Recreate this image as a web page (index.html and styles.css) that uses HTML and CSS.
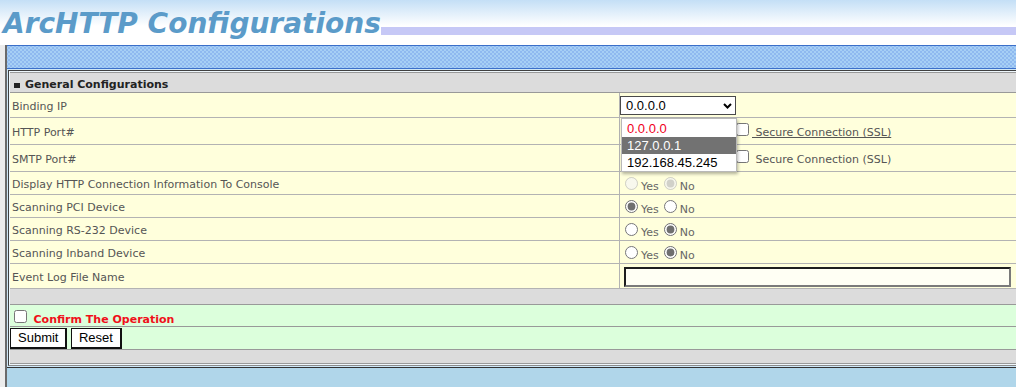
FILE: index.html
```html
<!DOCTYPE html>
<html lang="en">
<head>
<meta charset="UTF-8" />
<title>ArcHTTP Configurations</title>
<link rel="stylesheet" href="styles.css">
</head>
<body>

<div class="top">
  <h1 class="title">ArcHTTP Configurations</h1>
  <div class="stripe"></div>
</div>

<div class="frame">
  <div class="side"></div>
  <div class="main">
    <div class="dots"></div>
    <div class="panel">
      <div class="box">
        <table class="cfg">
          <colgroup><col class="c-label"><col></colgroup>
          <tr class="r-head">
            <td colspan="2"><span class="bullet"></span>General Configurations</td>
          </tr>
          <tr class="r-sel">
            <td class="label">Binding IP</td>
            <td class="value pop-anchor">
              <span class="select-wrap">
                <select class="select">
                  <option>0.0.0.0</option>
                  <option>127.0.0.1</option>
                  <option>192.168.45.245</option>
                </select>
                <svg class="chev" width="9" height="6" viewBox="0 0 9 6"><path d="M1 1 L4.5 4.5 L8 1" fill="none" stroke="#000" stroke-width="2"/></svg>
              </span>
              <div class="popup">
                <div class="opt opt-current">0.0.0.0</div>
                <div class="opt opt-hover">127.0.0.1</div>
                <div class="opt">192.168.45.245</div>
              </div>
            </td>
          </tr>
          <tr class="r-port">
            <td class="label">HTTP Port#</td>
            <td class="value"><input class="field port" type="text" value="81"><input type="checkbox"><label class="ssl ssl-hover"> Secure Connection (SSL)</label></td>
          </tr>
          <tr class="r-port">
            <td class="label">SMTP Port#</td>
            <td class="value"><input class="field port" type="text" value="25"><input type="checkbox"><label class="ssl"> Secure Connection (SSL)</label></td>
          </tr>
          <tr class="r-radio">
            <td class="label">Display HTTP Connection Information To Console</td>
            <td class="value"><input type="radio" name="disp" disabled><span class="yn">Yes</span><input type="radio" name="disp" checked disabled><span class="yn">No</span></td>
          </tr>
          <tr class="r-radio">
            <td class="label">Scanning PCI Device</td>
            <td class="value"><input type="radio" name="pci" checked><span class="yn">Yes</span><input type="radio" name="pci"><span class="yn">No</span></td>
          </tr>
          <tr class="r-radio">
            <td class="label">Scanning RS-232 Device</td>
            <td class="value"><input type="radio" name="rs"><span class="yn">Yes</span><input type="radio" name="rs" checked><span class="yn">No</span></td>
          </tr>
          <tr class="r-radio">
            <td class="label">Scanning Inband Device</td>
            <td class="value"><input type="radio" name="inb"><span class="yn">Yes</span><input type="radio" name="inb" checked><span class="yn">No</span></td>
          </tr>
          <tr class="r-input">
            <td class="label">Event Log File Name</td>
            <td class="value"><input class="field logname" type="text"></td>
          </tr>
          <tr class="r-gap">
            <td colspan="2"></td>
          </tr>
          <tr class="r-confirm">
            <td colspan="2"><input type="checkbox"> <span class="confirm">Confirm The Operation</span></td>
          </tr>
          <tr class="r-buttons">
            <td colspan="2"><button class="btn">Submit</button> <button class="btn">Reset</button></td>
          </tr>
          <tr class="r-gap r-last">
            <td colspan="2"></td>
          </tr>
        </table>
      </div>
    </div>
  </div>
</div>

</body>
</html>
```

FILE: styles.css
```css
html, body {
  margin: 0;
  height: 100%;
}
body {
  font-family: "DejaVu Sans", Verdana, sans-serif;
  font-size: 11px;
  background: #b0d6ea;
  overflow: hidden;
}

/* page title strip */
.top {
  display: flex;
  height: 45px;
  background: linear-gradient(#c4dff6, #ffffff 26px);
}
.title {
  margin: 0;
  padding: 7px 0 0 3px;
  font-size: 28px;
  font-weight: bold;
  font-style: oblique;
  color: #5b9bc9;
  line-height: 33px;
  white-space: nowrap;
}
.stripe {
  flex: 1;
  background: linear-gradient(to bottom, transparent 27px, #c6c8f6 27px, #c6c8f6 35px, transparent 35px);
}

.frame {
  display: flex;
  width: 1040px;
  height: calc(100% - 45px);
}
.side {
  width: 5px;
  background: #ececec;
}
.main {
  flex: 1;
  border-left: 2px solid #6a6a6a;
}
.dots {
  height: 22px;
  border-top: 1px solid #3b6fc9;
  border-bottom: 1px solid #3b6fc9;
  background-color: #a6cff5;
  background-image:
    radial-gradient(circle, #5a88e4 0.5px, transparent 0.8px),
    radial-gradient(circle, #5a88e4 0.5px, transparent 0.8px),
    radial-gradient(circle, #e8f3ff 0.4px, transparent 0.7px),
    radial-gradient(circle, #e8f3ff 0.4px, transparent 0.7px);
  background-size: 4px 4px;
  background-position: 0 0, 2px 2px, 2px 0, 0 2px;
}
.panel {
  padding: 1px;
  background: #cde6f6;
  border-bottom: 1px solid #333;
}
.box {
  padding: 1px;
  background: #eef7fc;
  border-top: 1px solid #404040;
  border-left: 1px solid #404040;
  border-bottom: 1px solid #8a8a8a;
}

/* config table */
.cfg {
  width: 100%;
  table-layout: fixed;
  border-collapse: separate;
  border-spacing: 0;
  border-top: 1px solid #999;
}
.c-label {
  width: 610px;
}
.cfg td {
  padding: 0;
  vertical-align: middle;
  background: #ffffdc;
  border-bottom: 1px solid #b3b3b3;
  color: #555;
  white-space: nowrap;
}
.cfg td.label {
  padding: 2px 0 0 2px;
  border-right: 1px solid #b3b3b3;
}
.cfg td.value {
  padding: 1px 0 0;
}

.r-head { height: 20px; }
.r-head td {
  padding-top: 4px;
  background: #dcdcdc;
  border-bottom-color: #999;
  font-weight: bold;
  color: #222;
}
.bullet {
  display: inline-block;
  width: 6px;
  height: 5px;
  margin: 0 5px 0 4px;
  background: #222;
}
.r-sel { height: 25px; }
.r-port { height: 27px; }
.r-radio { height: 23px; }
.r-input { height: 25px; }
.r-gap { height: 16px; }
.r-last { height: 14px; }
.r-confirm { height: 21px; }
.r-buttons { height: 23px; }
.r-gap td {
  background: #dcdcdc;
  border-bottom-color: #999;
}
.r-confirm td,
.r-buttons td {
  background: #dcffdc;
  border-bottom-color: #999;
}
.r-confirm td {
  padding-top: 2px;
}

/* binding ip select + open list */
.pop-anchor {
  position: relative;
}
.select-wrap {
  position: relative;
  display: inline-block;
  vertical-align: middle;
}
.select {
  appearance: none;
  width: 116px;
  height: 19px;
  margin: 0;
  padding: 0 0 0 5px;
  border: 1px solid #4a4a4a;
  border-radius: 0;
  background: #fff;
  font-family: "Liberation Sans", Arial, sans-serif;
  font-size: 13px;
  color: #000;
}
.chev {
  position: absolute;
  right: 4px;
  top: 7px;
}
.popup {
  position: absolute;
  left: 1px;
  top: 25px;
  width: 114px;
  padding: 1px 0 0;
  border: 1px solid #b8b8b8;
  background: #fff;
  box-shadow: 1px 2px 3px rgba(0, 0, 0, 0.3);
  z-index: 2;
}
.opt {
  height: 17px;
  line-height: 17px;
  padding-left: 5px;
  font-family: "Liberation Sans", Arial, sans-serif;
  font-size: 13px;
  color: #000;
}
.opt-current {
  color: #f0001c;
}
.opt-hover {
  background: #727272;
  color: #fff;
}

/* fields */
.field {
  box-sizing: border-box;
  height: 20px;
  margin: 0 0 0 4px;
  padding: 0 3px;
  border-style: solid;
  border-width: 2px;
  border-color: #1e1e1e #7a7a7a #7a7a7a #1e1e1e;
  background: #fffff4;
  vertical-align: middle;
  font-family: "Liberation Sans", Arial, sans-serif;
  font-size: 13px;
}
.port {
  width: 108px;
}
.logname {
  width: 387px;
}
input[type=checkbox] {
  margin: 3px 3px 3px 4px;
}
input[type=radio] {
  accent-color: #6f6f6f;
}
.ssl {
  color: #555;
}
.ssl-hover {
  text-decoration: underline;
}
.yn {
  color: #666;
}
.confirm {
  font-weight: bold;
  color: #f0101a;
}
.btn {
  box-sizing: border-box;
  height: 21px;
  margin: 0;
  padding: 0 7px;
  border-style: solid;
  border-color: #111;
  border-width: 1px 2px 2px 1px;
  background: #fff;
  color: #000;
  font-family: "Liberation Sans", Arial, sans-serif;
  font-size: 13px;
  vertical-align: middle;
}
```
